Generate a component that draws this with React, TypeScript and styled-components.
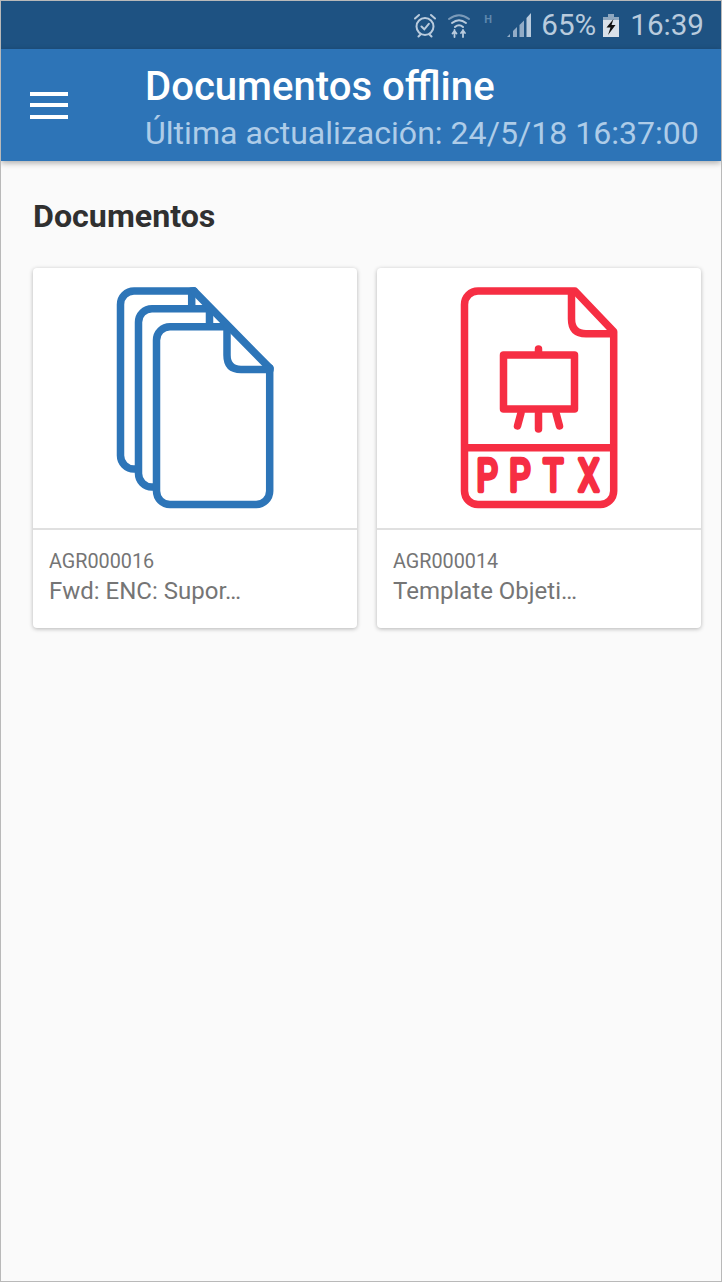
import React from "react";
import styled, { createGlobalStyle } from "styled-components";

const Global = createGlobalStyle`
  html, body { margin: 0; padding: 0; background: #fafafa; }
  body { font-family: Roboto, "Liberation Sans", sans-serif; }
`;

const Phone = styled.div`
  box-sizing: border-box;
  width: 722px;
  height: 1282px;
  border: 1px solid #b9b9b9;
  background: #fafafa;
  display: flex;
  flex-direction: column;
  overflow: hidden;
`;

const StatusBar = styled.div`
  height: 48px;
  flex: none;
  background: #1e5282;
  color: #b9cbdd;
  display: flex;
  align-items: center;
  justify-content: flex-end;
  padding-right: 17px;
  font-size: 29.6px;
`;

const StatusIcon = styled.svg<{ $gap: number }>`
  display: block;
  flex: none;
  margin-right: ${(p) => p.$gap}px;
`;

const StatusText = styled.span<{ $gap?: number }>`
  line-height: 48px;
  margin-right: ${(p) => p.$gap ?? 0}px;
`;

const NetworkType = styled.span`
  align-self: flex-start;
  margin: 13px 15px 0 0;
  width: 8px;
  color: #5f88ae;
  font-size: 11px;
  font-weight: 700;
  line-height: 11px;
`;

const AppBar = styled.header`
  height: 112px;
  flex: none;
  background: #2d74b7;
  box-shadow: 0 2px 6px rgba(0, 0, 0, 0.32);
  display: flex;
  align-items: center;
  position: relative;
  z-index: 1;
`;

const Burger = styled.div`
  width: 38px;
  margin: 0 77px 0 29px;
  display: flex;
  flex-direction: column;
  gap: 7.5px;
  flex: none;
`;

const BurgerBar = styled.span`
  display: block;
  height: 4px;
  background: #fff;
`;

const Titles = styled.div`
  display: flex;
  flex-direction: column;
  white-space: nowrap;
  padding-top: 10px;
`;

const Title = styled.div`
  color: #fff;
  font-size: 40.1px;
  font-weight: 500;
  line-height: 46px;
`;

const Subtitle = styled.div`
  color: #aecce8;
  font-size: 32.1px;
  line-height: 46px;
`;

const Content = styled.main`
  padding: 36px 20px 0 32px;
  display: flex;
  flex-direction: column;
`;

const Heading = styled.h2`
  margin: 0 0 33px;
  color: #303030;
  font-size: 32.2px;
  font-weight: 700;
  line-height: 38px;
`;

const CardGrid = styled.div`
  display: grid;
  grid-template-columns: 324px 324px;
  gap: 20px;
`;

const Card = styled.article`
  height: 360px;
  background: #fff;
  border-radius: 4px;
  box-shadow: 0 1px 4px rgba(0, 0, 0, 0.28);
  display: flex;
  flex-direction: column;
`;

const Thumb = styled.div`
  height: 260px;
  border-bottom: 2px solid #e0e0e0;
  display: flex;
  justify-content: center;
  align-items: flex-start;
`;

const ThumbIcon = styled.svg<{ $nudge?: number }>`
  display: block;
  margin-top: 12px;
  margin-left: ${(p) => p.$nudge ?? 0}px;
`;

const Caption = styled.div`
  padding: 19px 16px 0;
  color: #757575;
`;

const Code = styled.div`
  font-size: 19.8px;
  line-height: 25px;
`;

const Name = styled.div`
  font-size: 24px;
  line-height: 34px;
  white-space: nowrap;
`;

const StackIcon = () => (
  <ThumbIcon width="190" height="235" viewBox="100 280 190 235" fill="none" stroke="#2d75b8" strokeWidth="7.5" strokeLinejoin="round" strokeLinecap="round">
    <path d="M194 291H134a13.5 13.5 0 0 0-13.5 13.5V455.5A13.5 13.5 0 0 0 134 469H136" />
    <path d="M191.7 291V308" />
    <path d="M209.5 308.7H152a13.5 13.5 0 0 0-13.5 13.5V473.5A13.5 13.5 0 0 0 152 487H154" />
    <path d="M209.5 309V326" />
    <path d="M227 326.7H170a13.5 13.5 0 0 0-13.5 13.5V491A13.5 13.5 0 0 0 170 504.5H256A13.5 13.5 0 0 0 269.7 491V368" />
    <path d="M194 291L269.7 368" />
    <path d="M227 327V355Q227 369.5 241 369.5H270" />
  </ThumbIcon>
);

const SlidesIcon = () => (
  <ThumbIcon $nudge={2} width="180" height="235" viewBox="450 280 180 235" fill="none" stroke="#f62e43" strokeWidth="7.5" strokeLinejoin="round" strokeLinecap="round">
    <path d="M575 291H478a13.5 13.5 0 0 0-13.5 13.5V491A13.5 13.5 0 0 0 478 504.5H600A13.5 13.5 0 0 0 613.7 491V331.7L575 291Z" />
    <path d="M571.5 293V319Q571.5 333.7 586 333.7H612" />
    <path d="M465 447.7H613" />
    <rect x="503.5" y="355" width="71" height="54" />
    <path d="M538.5 349V354M538.5 413V429M521 413L517.5 426M556 413L559.5 426" />
    <text
      transform="translate(487 491) scale(0.76 1)"
      x="0 43 87 134"
      textAnchor="middle"
      fontFamily="Roboto, sans-serif"
      fontSize="44"
      fontWeight="400"
      fill="#f62e43"
      strokeWidth="4.5"
    >
      PPTX
    </text>
  </ThumbIcon>
);

export default function App() {
  return (
    <>
      <Global />
      <Phone>
        <StatusBar>
          <StatusIcon $gap={12} width="22" height="25" viewBox="0 0 22 25" fill="none" stroke="#b9cbdd" strokeWidth="2" strokeLinecap="round">
            <circle cx="11" cy="13.5" r="8.5" />
            <path d="M7.5 13.5l2.8 2.8 4.5-5.5M1 5.5L5 2M21 5.5L17 2M4.5 23.5l2-2M17.5 23.5l-2-2" />
          </StatusIcon>
          <StatusIcon $gap={14} width="22" height="25" viewBox="0 0 22 25" fill="none" stroke="#b9cbdd" strokeWidth="2" strokeLinecap="round">
            <path d="M1 6Q11 -1.5 21 6" opacity="0.6" />
            <path d="M4 10Q11 4.5 18 10" />
            <path d="M7 14Q11 10.5 15 14" />
            <path d="M6.5 17V24M4.5 20.5L6.5 18L8.5 20.5M15 24V17M13 20L15 17.5L17 20" strokeWidth="1.8" />
          </StatusIcon>
          <NetworkType>H</NetworkType>
          <StatusIcon $gap={10} width="24" height="24" viewBox="0 0 24 24" fill="#b9cbdd">
            <path d="M0 24L3 21V24Z" opacity="0.75" />
            <path d="M6 18L10 14V24H6Z" opacity="0.75" />
            <path d="M12.5 12L17 7.5V24H12.5Z" opacity="0.75" />
            <path d="M19.5 5L24 0V24H19.5Z" />
          </StatusIcon>
          <StatusText $gap={7}>65%</StatusText>
          <StatusIcon $gap={11} width="16" height="23" viewBox="0 0 16 23">
            <path d="M5 0H11V3H16V23H0V3H5Z" fill="#d9e1e9" />
            <path d="M0 3H16V6H0ZM5 0H11V3H5Z" fill="#8ea7bf" />
            <path d="M10.5 5L3.5 13.5H7.5L5 21L12.5 11H8.5Z" fill="#111" />
          </StatusIcon>
          <StatusText>16:39</StatusText>
        </StatusBar>
        <AppBar>
          <Burger>
            <BurgerBar />
            <BurgerBar />
            <BurgerBar />
          </Burger>
          <Titles>
            <Title>Documentos offline</Title>
            <Subtitle>Última actualización: 24/5/18 16:37:00</Subtitle>
          </Titles>
        </AppBar>
        <Content>
          <Heading>Documentos</Heading>
          <CardGrid>
            <Card>
              <Thumb>
                <StackIcon />
              </Thumb>
              <Caption>
                <Code>AGR000016</Code>
                <Name>Fwd: ENC: Supor…</Name>
              </Caption>
            </Card>
            <Card>
              <Thumb>
                <SlidesIcon />
              </Thumb>
              <Caption>
                <Code>AGR000014</Code>
                <Name>Template Objeti…</Name>
              </Caption>
            </Card>
          </CardGrid>
        </Content>
      </Phone>
    </>
  );
}
